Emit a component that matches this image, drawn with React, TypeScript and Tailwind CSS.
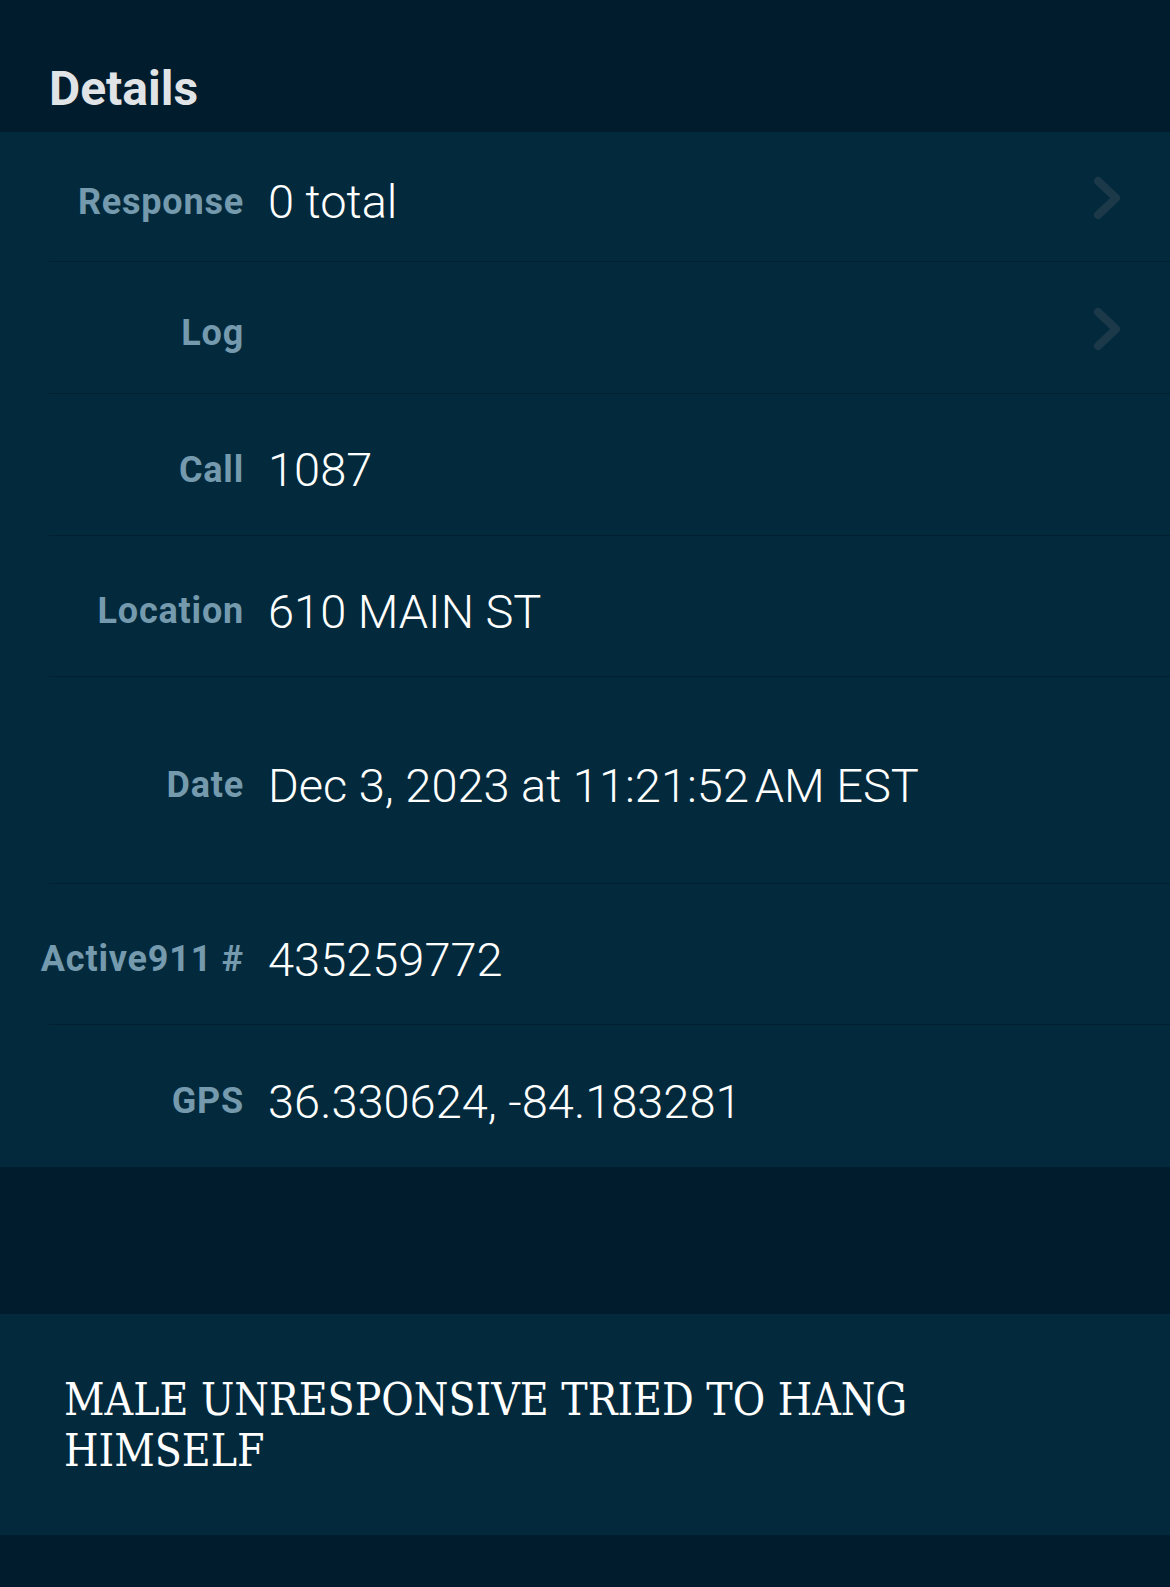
import React from 'react';

const rows = [
  { label: 'Response', value: '0 total', height: 'h-[130px]', chevron: true },
  { label: 'Log', value: '', height: 'h-[132px]', chevron: true },
  { label: 'Call', value: '1087', height: 'h-[142px]', chevron: false },
  { label: 'Location', value: '610 MAIN ST', height: 'h-[141px]', chevron: false },
  { label: 'Date', value: 'Dec 3, 2023 at 11:21:52\u202FAM EST', height: 'h-[207px]', chevron: false },
  { label: 'Active911 #', value: '435259772', height: 'h-[141px]', chevron: false },
  { label: 'GPS', value: '36.330624, -84.183281', height: 'h-[142px]', chevron: false },
];

const Chevron = () => (
  <svg width="30" height="44" viewBox="0 0 30 44" fill="none" className="shrink-0">
    <path d="M6 5 L24 22 L6 39" stroke="#1b3949" strokeWidth="8" strokeLinecap="round" strokeLinejoin="round" />
  </svg>
);

const App = () => {
  return (
    <div className="w-[1170px] h-[1587px] bg-[#011c2d] overflow-hidden" style={{ fontFamily: 'Roboto, "Open Sans", sans-serif' }}>
      {/* Header */}
      <div className="h-[132px] flex items-end pb-[19px] pl-[49px]">
        <h1 className="text-[48px] font-bold text-[#e1e4e7] leading-none">Details</h1>
      </div>

      {/* Details list */}
      <div className="bg-[#032a3c]">
        {rows.map((row, index) => (
          <div
            key={index}
            className={`ml-[49px] pt-[10px] flex items-center ${row.height} ${
              index < rows.length - 1 ? 'border-b border-[#011f2f]' : ''
            }`}
          >
            <div className="w-[195px] shrink-0 flex justify-end">
              <span className="whitespace-nowrap text-[36px] font-bold tracking-[0.8px] text-[#759aae] leading-none">
                {row.label}
              </span>
            </div>
            <div className="flex-1 pl-[24px] text-[47px] font-light text-white leading-none whitespace-nowrap">
              {row.value}
            </div>
            {row.chevron && (
              <div className="pr-[48px] -mt-[8px]">
                <Chevron />
              </div>
            )}
          </div>
        ))}
      </div>

      {/* Spacer */}
      <div className="h-[147px]"></div>

      {/* Description */}
      <div className="h-[221px] bg-[#032a3c] flex items-center px-[64px]">
        <p
          className="max-w-[900px] text-[44px] leading-[51px] text-white"
          style={{ fontFamily: '"DejaVu Serif Condensed", "DejaVu Serif", serif' }}
        >
          MALE UNRESPONSIVE TRIED TO HANG HIMSELF
        </p>
      </div>
    </div>
  );
};

export default App;
